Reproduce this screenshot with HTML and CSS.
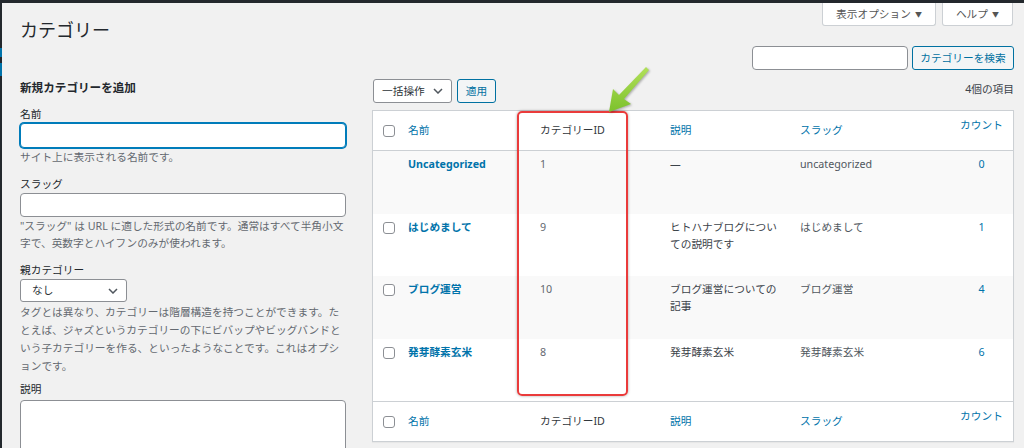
FILE: index.html
```html
<!DOCTYPE html>
<html lang="ja">
<head>
<meta charset="utf-8">
<title>カテゴリー</title>
<link rel="stylesheet" href="styles.css">
</head>
<body>
<div class="adminbar"></div>
<div class="page">
  <div class="menu-edge"><span class="edge-a"></span><span class="edge-b"></span></div>
  <div class="wrap">
    <header class="head">
      <h1>カテゴリー</h1>
      <div class="screen-links">
        <div class="tab">表示オプション <span class="tri">▼</span></div>
        <div class="tab">ヘルプ <span class="tri">▼</span></div>
      </div>
    </header>
    <div class="cols">
      <div class="col-left">
        <h2>新規カテゴリーを追加</h2>
        <div class="field">
          <label>名前</label>
          <div class="inp focus"></div>
          <p class="desc">サイト上に表示される名前です。</p>
        </div>
        <div class="field">
          <label>スラッグ</label>
          <div class="inp"></div>
          <p class="desc">"スラッグ" は URL に適した形式の名前です。通常はすべて半角小文<br>字で、英数字とハイフンのみが使われます。</p>
        </div>
        <div class="field">
          <label>親カテゴリー</label>
          <div class="select">なし
            <svg class="chev" width="10" height="6" viewBox="0 0 10 6"><path d="M1 1l4 4 4-4" fill="none" stroke="#50575e" stroke-width="1.5"/></svg>
          </div>
          <p class="desc tall">タグとは異なり、カテゴリーは階層構造を持つことができます。たとえば、ジャズというカテゴリーの下にビバップやビッグバンドという子カテゴリーを作る、といったようなことです。これはオプションです。</p>
        </div>
        <div class="field last">
          <label>説明</label>
          <div class="textarea"></div>
        </div>
      </div>
      <div class="col-right">
        <div class="search">
          <div class="search-inp"></div>
          <div class="btn search-btn">カテゴリーを検索</div>
        </div>
        <div class="tablenav">
          <div class="bulk">一括操作
            <svg width="10" height="6" viewBox="0 0 10 6"><path d="M1 1l4 4 4-4" fill="none" stroke="#50575e" stroke-width="1.5"/></svg>
          </div>
          <div class="btn apply">適用</div>
          <div class="count">4個の項目</div>
        </div>
        <div class="table-box">
          <table class="list">
            <colgroup>
              <col class="c-cb"><col class="c-name"><col class="c-id"><col class="c-desc"><col class="c-slug"><col class="c-num">
            </colgroup>
            <thead>
              <tr>
                <th class="cbcell"><span class="cb"></span></th>
                <th class="lnk">名前</th>
                <th>カテゴリーID</th>
                <th class="lnk">説明</th>
                <th class="lnk">スラッグ</th>
                <th class="lnk num up">カウント</th>
              </tr>
            </thead>
            <tbody>
              <tr class="alt">
                <td class="cbcell"></td>
                <td class="name">Uncategorized</td>
                <td class="id">1</td>
                <td class="dsc">—</td>
                <td class="slug">uncategorized</td>
                <td class="num lnk">0</td>
              </tr>
              <tr>
                <td class="cbcell"><span class="cb"></span></td>
                <td class="name">はじめまして</td>
                <td class="id">9</td>
                <td class="dsc">ヒトハナブログについての説明です</td>
                <td class="slug">はじめまして</td>
                <td class="num lnk">1</td>
              </tr>
              <tr class="alt">
                <td class="cbcell"><span class="cb"></span></td>
                <td class="name">ブログ運営</td>
                <td class="id">10</td>
                <td class="dsc">ブログ運営についての記事</td>
                <td class="slug">ブログ運営</td>
                <td class="num lnk">4</td>
              </tr>
              <tr>
                <td class="cbcell"><span class="cb"></span></td>
                <td class="name">発芽酵素玄米</td>
                <td class="id">8</td>
                <td class="dsc">発芽酵素玄米</td>
                <td class="slug">発芽酵素玄米</td>
                <td class="num lnk">6</td>
              </tr>
            </tbody>
            <tfoot>
              <tr>
                <th class="cbcell"><span class="cb"></span></th>
                <th class="lnk">名前</th>
                <th>カテゴリーID</th>
                <th class="lnk">説明</th>
                <th class="lnk">スラッグ</th>
                <th class="lnk num up">カウント</th>
              </tr>
            </tfoot>
          </table>
          <div class="highlight"></div>
          <svg class="arrow" width="56" height="64" viewBox="0 0 56 64">
            <defs>
              <linearGradient id="g" x1="0" y1="0" x2="0" y2="1">
                <stop offset="0" stop-color="#b2e05a"/>
                <stop offset="1" stop-color="#7cc12c"/>
              </linearGradient>
            </defs>
            <polygon points="44,9 47,12 22,41 29,46 7,54 11,31 17,37" fill="url(#g)"/>
          </svg>
        </div>
      </div>
    </div>
  </div>
</div>
</body>
</html>
```

FILE: styles.css
```css
* { box-sizing: border-box; }
html, body { margin: 0; padding: 0; }
body {
  background: #f1f1f1;
  font-family: "Noto Sans", "Noto Sans CJK JP", sans-serif;
  font-size: 10.7px;
  line-height: 17px;
  color: #3c434a;
  height: 448px;
  overflow: hidden;
}
.adminbar { height: 3px; background: #23282d; }
.page { display: flex; height: 445px; overflow: hidden; }
.menu-edge { width: 2px; flex: none; background: #23282d; display: flex; flex-direction: column; }
.edge-a { height: 9px; margin-top: 45px; background: #0073aa; }
.edge-b { height: 13px; margin-top: 6px; background: #0073aa; }
.wrap { flex: 1; padding: 0 10px 0 18px; }

.head { display: flex; justify-content: space-between; align-items: flex-start; height: 43px; }
h1 { margin: 12px 0 0; font-size: 18px; font-weight: 400; line-height: 30px; color: #23282d; }
.screen-links { display: flex; gap: 6px; margin-right: 1px; }
.tab {
  height: 23px; padding: 0 13px; background: #fff;
  border: 1px solid #ccd0d4; border-top: none; border-radius: 0 0 3px 3px;
  color: #555; display: flex; align-items: center; gap: 4px;
}
.tri { font-size: 7px; color: #555; }

.cols { display: flex; gap: 26px; }
.col-left { width: 326px; flex: none; }
.col-right { flex: 1; min-width: 0; }

.col-left h2 { margin: 34px 0 0; font-size: 11.6px; font-weight: 700; line-height: 16px; color: #23282d; }
.field { margin-top: 10px; }
.field label { display: block; line-height: 16px; color: #23282d; margin-bottom: 1px; }
.inp { width: 100%; height: 24px; background: #fff; border: 1px solid #8c8f94; border-radius: 4px; }
.inp.focus { height: 25px; border-color: #007cba; box-shadow: 0 0 0 1px #007cba; }
.desc { margin: 1px 0 0; color: #646970; line-height: 17px; }
.desc.tall { margin-top: 1px; line-height: 18px; }
.select {
  width: 107px; height: 23px; background: #fff; border: 1px solid #8c8f94; border-radius: 3px;
  display: flex; align-items: center; justify-content: space-between; padding: 0 8px 0 11px; color: #2c3338;
}
.field.last { margin-top: 6px; }
.field.last label { margin-bottom: 3px; }
.textarea { width: 326px; height: 80px; background: #fff; border: 1px solid #8c8f94; border-radius: 4px; }

.search { display: flex; justify-content: flex-end; gap: 4px; }
.search-inp { width: 156px; height: 24px; background: #fff; border: 1px solid #8c8f94; border-radius: 4px; }
.btn {
  height: 24px; border: 1px solid #0071a1; border-radius: 3px; background: #f3f5f6; color: #0071a1;
  display: flex; align-items: center; justify-content: center;
}
.search-btn { width: 102px; }
.tablenav { display: flex; align-items: center; margin-top: 9px; height: 24px; }
.bulk {
  width: 79px; height: 24px; margin-left: 1px; background: #fff; border: 1px solid #8c8f94; border-radius: 3px;
  display: flex; align-items: center; justify-content: space-between; padding: 0 8px 0 8px; color: #2c3338;
}
.apply { width: 39px; margin-left: 5px; }
.count { margin-left: auto; align-self: flex-start; margin-top: 2px; color: #3c434a; }

.table-box { position: relative; margin-top: 7px; }
table.list {
  width: 642px; border-collapse: separate; border-spacing: 0; table-layout: fixed;
  background: #fff; border: 1px solid #ccd0d4; box-shadow: 0 1px 1px rgba(0,0,0,.04);
}
.c-cb { width: 27px; }
.c-name { width: 132px; }
.c-id { width: 130px; }
.c-desc { width: 130px; }
.c-slug { width: 158px; }
.c-num { width: 63px; }
th, td { padding: 0 10px 0 8px; text-align: left; font-weight: 400; }
thead th { height: 40px; border-bottom: 1px solid #ccd0d4; vertical-align: middle; color: #32373c; }
tfoot th { height: 40px; border-top: 1px solid #ccd0d4; vertical-align: middle; color: #32373c; }
tbody td { height: 62.5px; vertical-align: top; padding-top: 5px; }
tbody tr.alt td { background: #f9f9f9; }
.cbcell { padding-left: 10px; padding-right: 0; }
.cb { display: block; width: 12px; height: 12px; background: #fff; border: 1px solid #8c8f94; border-radius: 3px; }
tbody .cb { margin-top: 3px; }
th.lnk, td.lnk { color: #0073aa; }
.num { text-align: center; padding-left: 8px; padding-right: 8px; }
th.up { padding-bottom: 11px; }
td.name { color: #0073aa; font-weight: 700; }
td.id { color: #646970; }
td.dsc { color: #3c434a; }
td.slug { color: #50575e; }

.highlight {
  position: absolute; left: 145px; top: 1px; width: 111px; height: 285px;
  border: 2px solid #ea3b3b; border-radius: 5px; box-shadow: 0 0 3px rgba(0,0,0,.35);
}
.arrow {
  position: absolute; left: 230px; top: -52px;
  filter: drop-shadow(1px 1px 1px rgba(0,0,0,.3));
}
```
